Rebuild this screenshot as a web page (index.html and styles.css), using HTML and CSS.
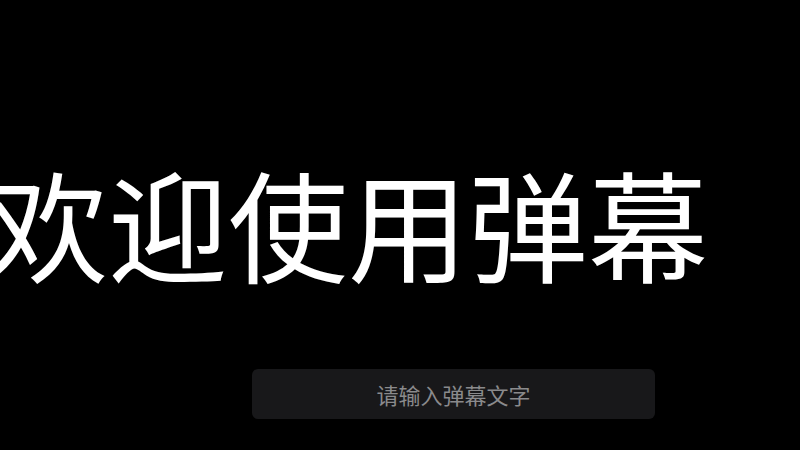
FILE: index.html
```html
<!DOCTYPE html>
<html lang="zh">
<head>
<meta charset="utf-8">
<link rel="stylesheet" href="styles.css">
</head>
<body>
<main class="stage">
  <div class="danmaku">欢迎使用弹幕</div>
  <div class="composer">
    <input class="danmaku-input" type="text" placeholder="请输入弹幕文字">
  </div>
</main>
</body>
</html>
```
FILE: styles.css
```css
html, body {
  margin: 0;
  padding: 0;
  background: #000;
  width: 800px;
  height: 450px;
  overflow: hidden;
}
.stage {
  width: 800px;
  height: 450px;
  display: flex;
  flex-direction: column;
  font-family: "Noto Sans CJK SC", "Noto Sans", sans-serif;
}
.danmaku {
  margin-top: 162px;
  margin-left: -12px;
  font-size: 120px;
  line-height: 120px;
  color: #fff;
  white-space: nowrap;
}
.composer {
  margin-top: 87px;
  padding-left: 252px;
}
.danmaku-input {
  box-sizing: border-box;
  width: 403px;
  height: 50px;
  border: none;
  outline: none;
  border-radius: 6px;
  background: #18181a;
  color: #fff;
  font-family: "Noto Sans CJK SC", "Noto Sans", sans-serif;
  font-size: 22px;
  text-align: center;
  padding: 0;
}
.danmaku-input::placeholder {
  color: #8a8a8c;
}
```
